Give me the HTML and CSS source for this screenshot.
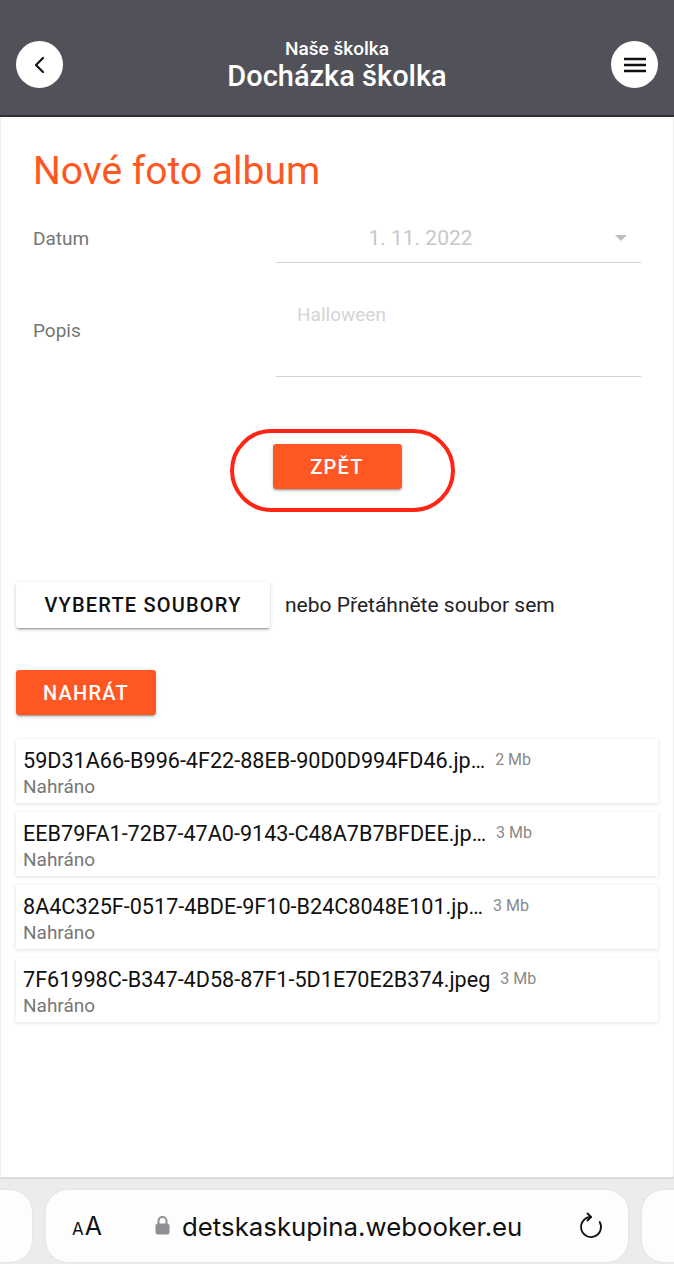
FILE: index.html
```html
<!DOCTYPE html>
<html lang="cs">
<head>
  <meta charset="UTF-8" />
  <meta name="viewport" content="width=device-width, initial-scale=1.0"/>
  <title>Docházka školka</title>
  <link rel="stylesheet" href="styles.css">
</head>
<body>

<header class="topbar">
  <button class="round-btn" aria-label="Zpět">
    <svg width="14" height="18" viewBox="0 0 14 18"><path d="M10 2 L3 9 L10 16" fill="none" stroke="#111" stroke-width="2.2" stroke-linecap="round" stroke-linejoin="round"/></svg>
  </button>
  <div class="topbar-title">
    <div class="subtitle">Naše školka</div>
    <div class="title">Docházka školka</div>
  </div>
  <button class="round-btn" aria-label="Menu">
    <svg width="22" height="16" viewBox="0 0 22 16"><path d="M0 2 H22 M0 8 H22 M0 14 H22" stroke="#111" stroke-width="2.4"/></svg>
  </button>
</header>

<main class="page">
  <div class="album-form">
    <h1>Nové foto album</h1>

    <div class="form-row">
      <label>Datum</label>
      <div class="field field-select">
        <span class="value">1. 11. 2022</span>
        <span class="caret"></span>
      </div>
    </div>

    <div class="form-row">
      <label>Popis</label>
      <div class="field field-area">
        <span class="placeholder">Halloween</span>
      </div>
    </div>

    <div class="back-wrap">
      <button class="btn btn-orange btn-back">ZPĚT</button>
      <span class="highlight"></span>
    </div>
  </div>

  <div class="upload">
    <div class="picker">
      <button class="btn btn-white">VYBERTE SOUBORY</button>
      <span class="drop-text">nebo Přetáhněte soubor sem</span>
    </div>

    <button class="btn btn-orange">NAHRÁT</button>

    <div class="file-list">
      <div class="file-item">
        <div class="file-line"><span class="file-name">59D31A66-B996-4F22-88EB-90D0D994FD46.jp…</span><span class="file-size">2 Mb</span></div>
        <div class="file-status">Nahráno</div>
      </div>
      <div class="file-item">
        <div class="file-line"><span class="file-name">EEB79FA1-72B7-47A0-9143-C48A7B7BFDEE.jp…</span><span class="file-size">3 Mb</span></div>
        <div class="file-status">Nahráno</div>
      </div>
      <div class="file-item">
        <div class="file-line"><span class="file-name">8A4C325F-0517-4BDE-9F10-B24C8048E101.jp…</span><span class="file-size">3 Mb</span></div>
        <div class="file-status">Nahráno</div>
      </div>
      <div class="file-item">
        <div class="file-line"><span class="file-name">7F61998C-B347-4D58-87F1-5D1E70E2B374.jpeg</span><span class="file-size">3 Mb</span></div>
        <div class="file-status">Nahráno</div>
      </div>
    </div>
  </div>
</main>

<footer class="browser-bar">
  <div class="pill pill-side"></div>
  <div class="pill pill-main">
    <span class="aa"><span class="aa-small">A</span>A</span>
    <span class="url">
      <svg width="15" height="20" viewBox="0 0 15 20"><path d="M3.5 9 V6 a4 4 0 0 1 8 0 V9" fill="none" stroke="#8e8e93" stroke-width="2"/><rect x="0.5" y="8.5" width="14" height="11" rx="2.5" fill="#8e8e93"/></svg>
      detskaskupina.webooker.eu
    </span>
    <svg class="reload" width="26" height="30" viewBox="0 0 26 30"><path d="M13 6 A10 10 0 1 0 21.7 11" fill="none" stroke="#111" stroke-width="1.8" stroke-linecap="round"/><path d="M9.5 2.5 L13 6 L9.5 9.5" fill="none" stroke="#111" stroke-width="1.8" stroke-linecap="round" stroke-linejoin="round"/></svg>
  </div>
  <div class="pill pill-side"></div>
</footer>

</body>
</html>
```

FILE: styles.css
```css
html, body {
  margin: 0;
  height: 100%;
}
body {
  display: flex;
  flex-direction: column;
  font-family: Roboto, "Liberation Sans", sans-serif;
  background: #fff;
  overflow: hidden;
}
button {
  font-family: inherit;
  cursor: pointer;
}

/* header */
.topbar {
  height: 117px;
  flex-shrink: 0;
  box-sizing: border-box;
  background: #515259;
  border-bottom: 2px solid #2f2f3a;
  display: flex;
  align-items: center;
  padding: 14px 16px 0;
}
.round-btn {
  width: 47px;
  height: 47px;
  border-radius: 50%;
  border: none;
  background: #fff;
  display: flex;
  align-items: center;
  justify-content: center;
  padding: 0;
}
.topbar-title {
  flex: 1;
  text-align: center;
  color: #fff;
  margin-top: 1px;
}
.subtitle {
  font-size: 19px;
  font-weight: 500;
  line-height: 22px;
}
.title {
  font-size: 29px;
  font-weight: 500;
  line-height: 32px;
}

/* page */
.page {
  flex: 1;
  border-left: 1px solid #eee;
  border-right: 1px solid #eee;
  padding: 0 15px;
}
.album-form {
  padding: 0 17px;
}
h1 {
  color: #ff5722;
  font-size: 39px;
  font-weight: 400;
  line-height: 46px;
  margin: 31px 0 20px;
}
.form-row {
  display: grid;
  grid-template-columns: 243px 1fr;
  align-items: center;
  margin-bottom: 26px;
}
.form-row label {
  color: #757575;
  font-size: 19px;
}
.form-row:nth-child(3) label {
  margin-top: -6px;
}
.field {
  border-bottom: 1px solid #d2d2d2;
  font-size: 19px;
  color: #c8c8c8;
}
.field-select {
  height: 48px;
  display: flex;
  align-items: center;
  position: relative;
}
.field-select .value {
  flex: 1;
  text-align: center;
  padding-right: 76px;
  font-size: 21px;
}
.caret {
  position: absolute;
  right: 14px;
  top: 21px;
  border-left: 6px solid transparent;
  border-right: 6px solid transparent;
  border-top: 6px solid #bdbdbd;
}
.field-area {
  height: 88px;
  box-sizing: border-box;
  padding: 14px 0 0 21px;
  color: #d4d4d4;
}

.back-wrap {
  position: relative;
  width: 129px;
  margin: 67px auto 0;
}
.highlight {
  position: absolute;
  left: -43px;
  top: -15px;
  width: 225px;
  height: 83px;
  box-sizing: border-box;
  border: 4px solid #ff2414;
  border-radius: 44px;
}

/* buttons */
.btn {
  height: 45px;
  border: none;
  border-radius: 3px;
  padding: 0 27px;
  font-size: 20px;
  font-weight: 500;
  letter-spacing: 0.06em;
  box-shadow: 0 2px 2px rgba(0,0,0,0.14), 0 3px 1px -2px rgba(0,0,0,0.2), 0 1px 5px rgba(0,0,0,0.12);
}
.btn-orange {
  background: #ff5722;
  color: #fff;
}
.btn-white {
  background: #fff;
  color: #111;
  height: 46px;
  width: 254px;
  padding: 0;
}
.btn-back {
  width: 129px;
  padding: 0;
}

/* upload */
.upload {
  margin-top: 93px;
}
.picker {
  display: flex;
  align-items: center;
  gap: 15px;
  margin-bottom: 42px;
}
.drop-text {
  font-size: 21px;
  color: #222;
}
.file-list {
  margin-top: 24px;
  display: flex;
  flex-direction: column;
  gap: 9px;
}
.file-item {
  height: 64px;
  box-sizing: border-box;
  padding: 8px 7px 0;
  background: #fff;
  box-shadow: 0 1px 4px rgba(0,0,0,0.13);
}
.file-line {
  display: flex;
  align-items: flex-start;
  gap: 10px;
  line-height: 28px;
}
.file-name {
  font-size: 21.6px;
  color: #111;
}
.file-size {
  font-size: 16px;
  color: #8a8a8a;
  line-height: 26px;
}
.file-status {
  font-size: 19px;
  color: #777;
  line-height: 24px;
}

/* safari bar */
.browser-bar {
  height: 87px;
  flex-shrink: 0;
  box-sizing: border-box;
  background: #ececec;
  border-top: 2px solid #dcdcdc;
  display: flex;
  justify-content: center;
  gap: 14px;
  padding-top: 11px;
  overflow: hidden;
}
.pill {
  height: 72px;
  border-radius: 22px;
  background: #fdfdfd;
  flex-shrink: 0;
  box-shadow: 0 0 3px rgba(0,0,0,0.06);
}
.pill-side {
  width: 200px;
}
.pill-main {
  width: 582px;
  display: flex;
  align-items: center;
  padding: 0 24px 0 26px;
  box-sizing: border-box;
  font-family: Inter, "Liberation Sans", sans-serif;
  color: #111;
}
.aa {
  font-size: 25px;
  width: 83px;
}
.aa-small {
  font-size: 17px;
  margin-right: 1px;
}
.url {
  flex: 1;
  display: flex;
  align-items: center;
  gap: 12px;
  font-size: 25.8px;
}
.url svg {
  margin-top: -2px;
}
```
